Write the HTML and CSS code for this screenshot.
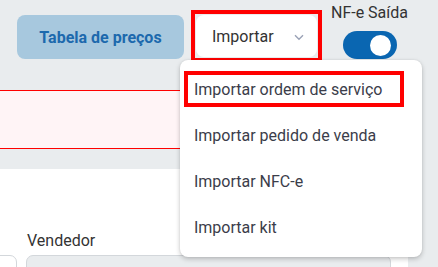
FILE: index.html
```html
<!DOCTYPE html>
<html lang="pt-BR">
<head>
<meta charset="utf-8">
<title>Importar</title>
<link rel="stylesheet" href="styles.css">
</head>
<body>
<div class="page">
  <div class="toolbar">
    <button class="btn-price">Tabela de preços</button>
    <div class="import-wrap">
      <button class="btn-import">
        <span>Importar</span>
        <svg class="chev" width="10" height="7" viewBox="0 0 10 7"><path d="M1 1.2 L5 5.2 L9 1.2" fill="none" stroke="#9aa2b6" stroke-width="1.4"/></svg>
      </button>
      <ul class="menu">
        <li class="item active">Importar ordem de serviço</li>
        <li class="item">Importar pedido de venda</li>
        <li class="item">Importar NFC-e</li>
        <li class="item">Importar kit</li>
      </ul>
    </div>
    <div class="nfe">
      <div class="nfe-label">NF-e Saída</div>
      <div class="toggle"><span class="knob"></span></div>
    </div>
  </div>
  <div class="banner"></div>
  <div class="panel">
    <div class="label">Vendedor</div>
    <div class="inputs">
      <div class="input input-left"></div>
      <div class="input input-main"></div>
    </div>
  </div>
</div>
</body>
</html>
```

FILE: styles.css
```css
* { box-sizing: border-box; }
html, body { margin: 0; padding: 0; }
body {
  background: #e9ecee;
  font-family: Roboto, "Liberation Sans", sans-serif;
  color: #333;
  overflow: hidden;
}
.page { width: 408px; }
.toolbar {
  height: 90px;
  display: flex;
  align-items: flex-start;
  padding: 15px 0 0 17px;
}
.btn-price {
  width: 167px;
  height: 44px;
  border: none;
  border-radius: 8px;
  background: #a7c8de;
  color: #1c69ad;
  font-family: Roboto, sans-serif;
  font-weight: 700;
  font-size: 16px;
  padding: 0;
  margin-right: 7px;
}
.import-wrap {
  position: relative;
  z-index: 5;
  margin-top: -5px;
  border: 4px solid #ff0000;
  padding: 1px;
}
.btn-import {
  width: 121px;
  height: 42px;
  border: none;
  border-radius: 8px;
  background: #fff;
  font-family: Roboto, sans-serif;
  font-size: 16px;
  color: #333;
  display: flex;
  align-items: center;
  justify-content: space-between;
  padding: 0 13px 0 16px;
}
.chev { margin-top: 2px; }
.menu {
  position: absolute;
  left: -15px;
  top: 46px;
  width: 242px;
  height: 197px;
  margin: 0;
  padding: 11px 0 0;
  list-style: none;
  background: #fff;
  border-radius: 8px;
  box-shadow: 0 2px 5px rgba(0,0,0,0.22), 0 0 2px rgba(0,0,0,0.08);
  display: flex;
  flex-direction: column;
  gap: 10px;
}
.item {
  height: 36px;
  margin: 0 18px 0 4px;
  padding-left: 6px;
  border: 4px solid transparent;
  display: flex;
  align-items: center;
  font-size: 16px;
  color: #3b3d4a;
  white-space: nowrap;
}
.item.active { border-color: #ff0000; }
.nfe {
  margin: -12px 0 0 9px;
  display: flex;
  flex-direction: column;
}
.nfe-label {
  font-size: 16px;
  line-height: 19px;
  color: #333;
  white-space: nowrap;
}
.toggle {
  margin: 9px 0 0 12px;
  width: 54px;
  height: 28px;
  border-radius: 14px;
  background: #0a66b1;
  display: flex;
  align-items: center;
  justify-content: flex-end;
  padding-right: 6px;
}
.knob {
  width: 21px;
  height: 21px;
  border-radius: 50%;
  background: #fff;
}
.banner {
  height: 59px;
  background: #fff4f6;
  border-top: 1px solid #ff0000;
  border-bottom: 1px solid #ff0000;
}
.panel {
  margin-top: 20px;
  background: #fff;
  height: 98px;
  padding-top: 62px;
  overflow: hidden;
}
.label {
  margin-left: 27px;
  font-size: 16px;
  line-height: 19px;
  color: #333;
}
.inputs {
  display: flex;
  gap: 9px;
  margin-top: 5px;
}
.input {
  height: 40px;
  border: 1px solid #d3d7db;
  border-radius: 7px;
}
.input-left {
  width: 40px;
  margin-left: -23px;
  background: #fff;
}
.input-main {
  width: 365px;
  background: #e9ecee;
}
```
